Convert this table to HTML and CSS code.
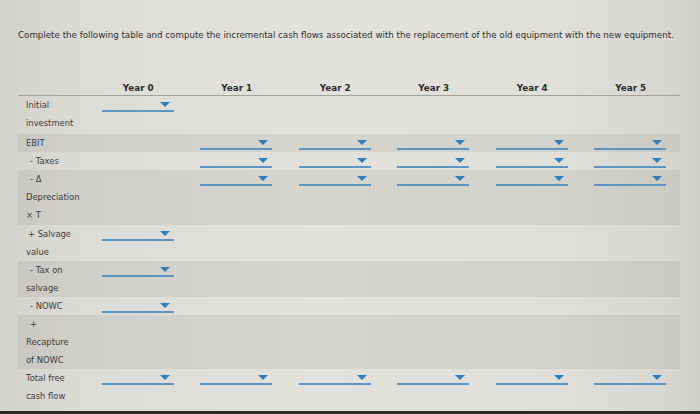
FILE: index.html
```html
<!DOCTYPE html>
<html lang="en">
<head>
<meta charset="utf-8">
<title>Incremental cash flows</title>
<link rel="stylesheet" href="styles.css">
</head>
<body>
<div class="page">
  <p class="prompt">Complete the following table and compute the incremental cash flows associated with the replacement of the old equipment with the new equipment.</p>
  <table class="cf">
    <colgroup>
      <col class="c-label">
      <col class="c-year"><col class="c-year"><col class="c-year"><col class="c-year"><col class="c-year"><col class="c-year">
    </colgroup>
    <thead>
      <tr>
        <th></th>
        <th>Year 0</th><th>Year 1</th><th>Year 2</th><th>Year 3</th><th>Year 4</th><th>Year 5</th>
      </tr>
    </thead>
    <tbody>
      <tr class="first">
        <td class="lbl">Initial<br>investment</td>
        <td><span class="dd"></span></td>
        <td></td><td></td><td></td><td></td><td></td>
      </tr>
      <tr class="shade">
        <td class="lbl">EBIT</td>
        <td></td>
        <td><span class="dd"></span></td><td><span class="dd"></span></td><td><span class="dd"></span></td><td><span class="dd"></span></td><td><span class="dd"></span></td>
      </tr>
      <tr>
        <td class="lbl op">- Taxes</td>
        <td></td>
        <td><span class="dd"></span></td><td><span class="dd"></span></td><td><span class="dd"></span></td><td><span class="dd"></span></td><td><span class="dd"></span></td>
      </tr>
      <tr class="shade tall">
        <td class="lbl op">- &Delta;<br>Depreciation<br>&times; T</td>
        <td></td>
        <td><span class="dd"></span></td><td><span class="dd"></span></td><td><span class="dd"></span></td><td><span class="dd"></span></td><td><span class="dd"></span></td>
      </tr>
      <tr>
        <td class="lbl op-s">+ Salvage<br>value</td>
        <td><span class="dd"></span></td>
        <td></td><td></td><td></td><td></td><td></td>
      </tr>
      <tr class="shade">
        <td class="lbl op">- Tax on<br>salvage</td>
        <td><span class="dd"></span></td>
        <td></td><td></td><td></td><td></td><td></td>
      </tr>
      <tr>
        <td class="lbl op">- NOWC</td>
        <td><span class="dd"></span></td>
        <td></td><td></td><td></td><td></td><td></td>
      </tr>
      <tr class="shade">
        <td class="lbl op">+<br>Recapture<br>of NOWC</td>
        <td></td>
        <td></td><td></td><td></td><td></td><td></td>
      </tr>
      <tr>
        <td class="lbl">Total free<br>cash flow</td>
        <td><span class="dd"></span></td>
        <td><span class="dd"></span></td><td><span class="dd"></span></td><td><span class="dd"></span></td><td><span class="dd"></span></td><td><span class="dd"></span></td>
      </tr>
    </tbody>
  </table>
</div>
</body>
</html>
```
FILE: styles.css
```css
html {
  margin: 0;
  background: #2b2a28;
}
body {
  margin: 0;
  height: 411px;
  overflow: hidden;
  background: linear-gradient(90deg, #d3d2cd 0%, #dedcd7 12%, #e3e2dd 45%, #e0dfd9 80%, #d7d6d0 96%, #cfcec8 100%);
  font-family: "DejaVu Sans", Verdana, sans-serif;
  color: #363636;
}
.page {
  padding: 29px 18px 0 18px;
}
.prompt {
  margin: 0;
  font-size: 8.7px;
  line-height: 12px;
  color: #2f2f2f;
}
.cf {
  margin-top: 38px;
  width: 662px;
  table-layout: fixed;
  border-collapse: collapse;
  font-size: 8.4px;
}
.c-label { width: 71px; }
.c-year { width: 98.5px; }
.cf th {
  font-size: 8.8px;
  font-weight: bold;
  color: #2c2c2c;
  height: 14px;
  padding: 2px 0 0 0;
  text-align: center;
  vertical-align: middle;
  border-bottom: 1.5px solid #a3a29d;
}
.cf td {
  padding: 0;
  line-height: 18px;
  vertical-align: top;
  text-align: center;
}
.cf tr.first td { padding-bottom: 2px; }
.cf tr.tall td { padding-bottom: 1px; }
.cf tr.shade td { background: rgba(110, 105, 90, 0.11); }
.cf td.lbl {
  text-align: left;
  padding-left: 8px;
  color: #3c3c3c;
}
.cf td.op { text-indent: 4px; }
.cf td.op-s { text-indent: 2px; }
.dd {
  display: inline-block;
  position: relative;
  width: 72px;
  height: 14px;
  margin-left: -1px;
  border-bottom: 2px solid #5b95c6;
  vertical-align: top;
}
.dd::after {
  content: "";
  position: absolute;
  right: 4px;
  top: 6px;
  border-left: 5px solid transparent;
  border-right: 5px solid transparent;
  border-top: 5px solid #2d7fbd;
}
```
